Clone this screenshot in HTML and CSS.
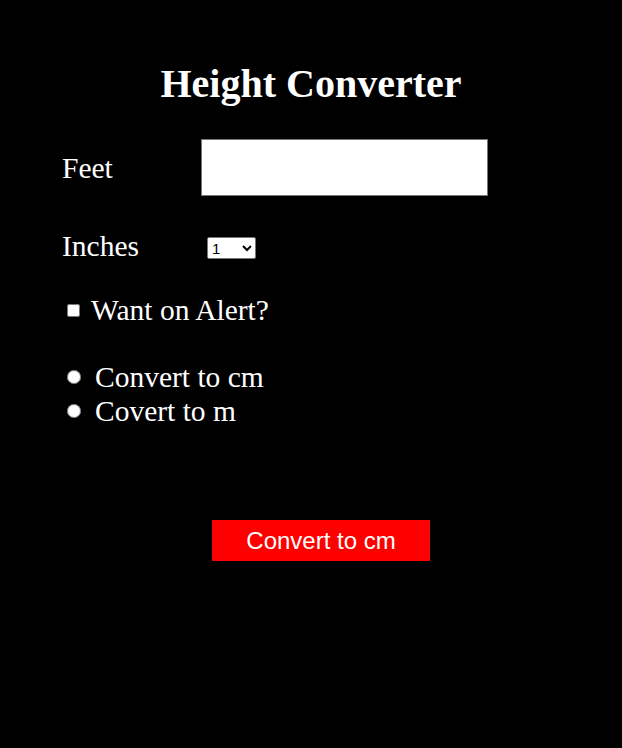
FILE: index.html
```html
<!DOCTYPE html>
<html>
<head>
<meta charset="utf-8">
<link rel="stylesheet" href="styles.css">
</head>
<body>
<div class="page">
  <h1 class="title">Height Converter</h1>
  <div class="row feet-row">
    <label class="label">Feet</label>
    <input class="feet-input" type="text">
  </div>
  <div class="row inches-row">
    <label class="label">Inches</label>
    <select class="inches-select">
      <option>1</option>
    </select>
  </div>
  <div class="check-row">
    <input type="checkbox" class="check">
    <span class="opt-text">Want on Alert?</span>
  </div>
  <div class="radios">
    <div class="radio-row"><input type="radio" name="u" class="radio"><span class="opt-text">Convert to cm</span></div>
    <div class="radio-row"><input type="radio" name="u" class="radio"><span class="opt-text">Covert to m</span></div>
  </div>
  <div class="btn-wrap">
    <button class="btn">Convert to cm</button>
  </div>
</div>
</body>
</html>
```
FILE: styles.css
```css
html, body {
  margin: 0;
  background: #000;
  color: #fff;
  font-family: "Liberation Serif", "Times New Roman", serif;
}
.page {
  width: 622px;
  height: 748px;
  padding-top: 62px;
  box-sizing: border-box;
}
.title {
  margin: 0;
  font-size: 40px;
  font-weight: bold;
  text-align: center;
  line-height: 44px;
}
.row {
  display: flex;
  align-items: center;
  padding-left: 62px;
}
.label {
  font-size: 29.5px;
  line-height: 34px;
  width: 139px;
}
.feet-row {
  margin-top: 33px;
}
.feet-input {
  width: 287px;
  height: 57px;
  box-sizing: border-box;
  border: 1px solid #767676;
  background: #fff;
  margin: 0;
  padding: 0;
}
.inches-row {
  margin-top: 33px;
  align-items: flex-start;
}
.inches-select {
  margin-left: 6px;
  margin-top: 8px;
  width: 49px;
  height: 22px;
  font-family: "Liberation Sans", Arial, sans-serif;
  font-size: 15px;
  background: #fff;
  color: #000;
  border: 1px solid #767676;
  border-radius: 2px;
}
.check-row {
  display: flex;
  align-items: center;
  padding-left: 67px;
  margin-top: 30px;
}
.check {
  margin: 0 11px 0 0;
  width: 13px;
  height: 13px;
}
.opt-text {
  font-size: 29.5px;
  line-height: 34px;
}
.radios {
  margin-top: 33px;
  padding-left: 67px;
}
.radio-row {
  display: flex;
  align-items: center;
  height: 34px;
}
.radio {
  margin: 0 14px 0 0;
  width: 14px;
  height: 14px;
}
.btn-wrap {
  display: flex;
  justify-content: center;
  margin-top: 92px;
}
.btn {
  width: 218px;
  height: 41px;
  background: #f00;
  color: #fff;
  border: none;
  font-family: "Liberation Sans", Arial, sans-serif;
  font-size: 24px;
  transform: translateX(10px);
}
```
